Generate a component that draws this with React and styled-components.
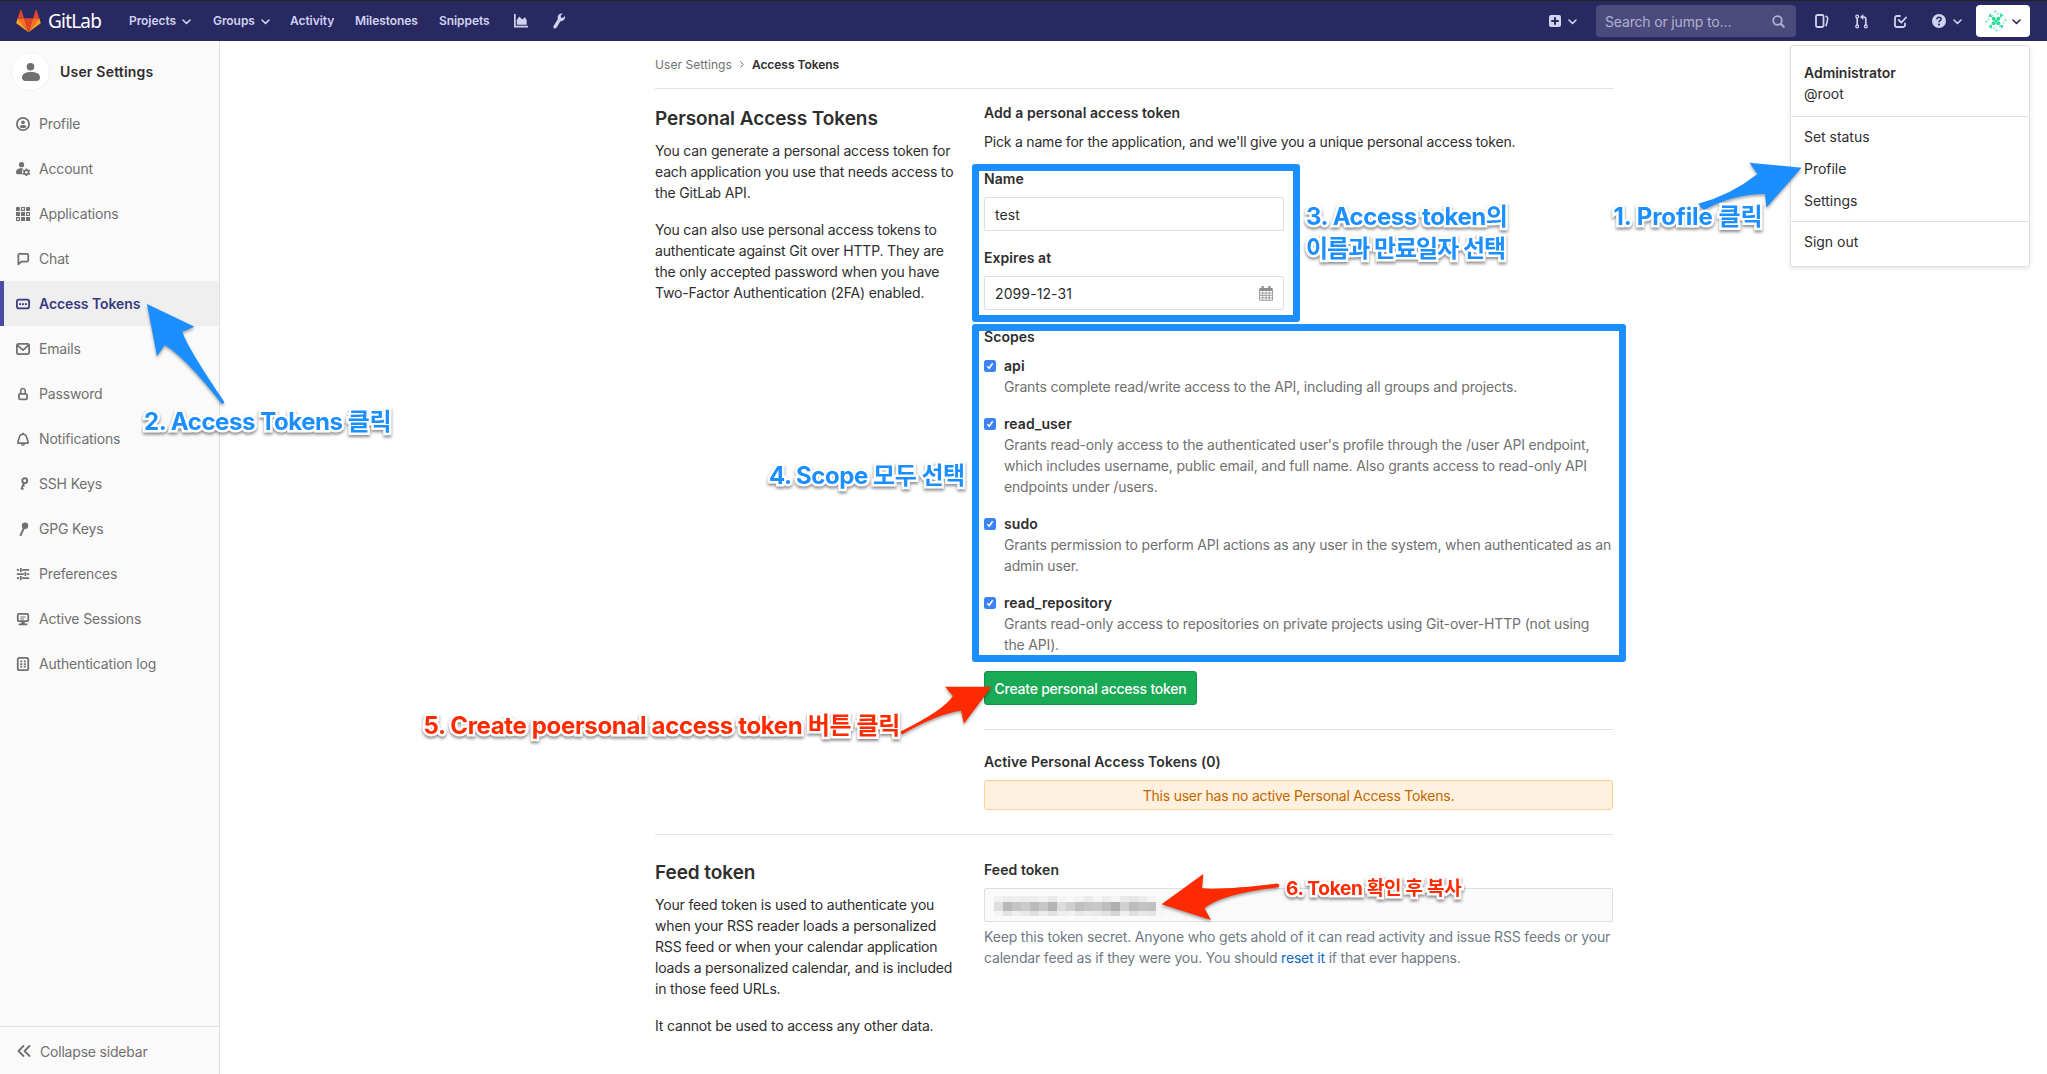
import React from 'react';
import styled, { createGlobalStyle, css } from 'styled-components';

const BLUE = '#1b8fff';
const RED = '#ff2a00';

const GlobalStyle = createGlobalStyle`
  *, *::before, *::after { box-sizing: border-box; }
  html, body { margin: 0; padding: 0; background: #fff; }
  body {
    font-family: Inter, "Noto Sans CJK KR", sans-serif;
    font-size: 14px;
    line-height: 21px;
    letter-spacing: -0.17px;
    color: #2e2e2e;
    overflow: hidden;
  }
  h4, p { margin: 0; font-weight: inherit; }
  a { color: inherit; text-decoration: none; }
  svg { display: block; flex: none; }
`;

const Page = styled.div`
  position: relative;
  width: 2047px;
  height: 1074px;
  display: flex;
  flex-direction: column;
  overflow: hidden;
`;

const Header = styled.header`
  flex: none;
  height: 41px;
  display: flex;
  align-items: center;
  justify-content: space-between;
  padding: 0 17px 0 16px;
  background: #292961;
  border-top: 1px solid #222;
  color: #d1d1f0;
`;

const HeaderGroup = styled.div`
  display: flex;
  align-items: center;
`;

const Brand = styled.a`
  display: flex;
  align-items: center;
  gap: 7px;
  width: 113px;
`;

const BrandName = styled.span`
  font: 400 19px/22px "Noto Sans", sans-serif;
  letter-spacing: -0.8px;
  color: #fff;
`;

const NavLink = styled.a`
  display: flex;
  align-items: center;
  gap: 6px;
  width: ${(p) => p.$w}px;
  padding-bottom: 1px;
  font-size: 12px;
  font-weight: 600;
  letter-spacing: -0.06px;
  white-space: nowrap;
`;

const IconLink = styled.a`
  display: flex;
  align-items: center;
  gap: ${(p) => p.$gap || 6}px;
  margin-right: ${(p) => p.$mr || 0}px;
`;

const Search = styled.div`
  width: 200px;
  height: 32px;
  margin-right: 19px;
  padding: 0 11px 0 9px;
  display: flex;
  align-items: center;
  justify-content: space-between;
  border-radius: 4px;
  background: #4b4a7c;
  color: #b1b0cf;
`;

const AvatarButton = styled.button`
  width: 54px;
  height: 32px;
  padding: 0 9px;
  display: flex;
  align-items: center;
  justify-content: space-between;
  border: 0;
  border-radius: 4px;
  background: #fff;
  color: #292961;
`;

const Body = styled.div`
  flex: 1;
  min-height: 0;
  display: flex;
`;

const Sidebar = styled.nav`
  flex: none;
  width: 220px;
  display: flex;
  flex-direction: column;
  background: #fafafa;
  border-right: 1px solid #e1e1e1;
`;

const SidebarTitle = styled.div`
  height: 60px;
  padding: 1px 0 0 11px;
  display: flex;
  align-items: center;
  gap: 10px;
  font-weight: 600;
  letter-spacing: 0.2px;
`;

const TitleAvatar = styled.span`
  width: 39px;
  height: 39px;
  display: grid;
  place-items: center;
  border-radius: 50%;
  border: 1px solid #f2f2f2;
  background: #fff;
  color: #707070;
`;

const SidebarItem = styled.a`
  height: 45px;
  padding-left: 16px;
  display: flex;
  align-items: center;
  gap: 9px;
  color: #707070;
  letter-spacing: -0.17px;
  ${(p) => p.$active && css`
    padding-left: 12px;
    border-left: 4px solid #4b4ba3;
    background: #efefef;
    color: #393982;
    font-weight: 600;
    letter-spacing: -0.08px;
  `}
`;

const Collapse = styled.button`
  height: 48px;
  margin-top: auto;
  padding: 1px 0 0 17px;
  display: flex;
  align-items: center;
  gap: 9px;
  border: 0;
  border-top: 1px solid #e1e1e1;
  background: transparent;
  color: #707070;
  font: inherit;
  letter-spacing: -0.2px;
`;

const Content = styled.main`
  width: 958px;
  margin-left: 435px;
`;

const Breadcrumbs = styled.div`
  height: 48px;
  padding-bottom: 1px;
  display: flex;
  align-items: center;
  gap: 8px;
  border-bottom: 1px solid #e1e1e1;
  font-size: 12px;
  letter-spacing: 0.06px;
  color: #707070;
  strong { font-weight: 600; color: #2e2e2e; letter-spacing: -0.04px; }
`;

const Section = styled.section`
  display: flex;
  height: ${(p) => p.$h}px;
  border-bottom: ${(p) => (p.$last ? 0 : 1)}px solid #e1e1e1;
`;

const Aside = styled.div`
  flex: none;
  width: 329px;
  padding: ${(p) => p.$top}px 20px 0 0;
  white-space: nowrap;
  p + p { margin-top: 16px; }
`;

const SectionTitle = styled.h4`
  margin-bottom: 9px;
  font-size: 19px;
  line-height: 24px;
  font-weight: 600;
  letter-spacing: -0.06px;
`;

const Main = styled.div`
  flex: 1;
  padding-top: ${(p) => p.$top}px;
`;

const Label = styled.div`
  margin-top: ${(p) => p.$mt || 0}px;
  font-weight: 600;
  letter-spacing: 0.06px;
`;

const Intro = styled.p`
  && { margin-top: 8px; }
  letter-spacing: -0.2px;
  white-space: nowrap;
`;

const TextInput = styled.div`
  width: ${(p) => p.$w || '300px'};
  height: 34px;
  margin-top: 8px;
  padding: 1px 10px 0;
  display: flex;
  align-items: center;
  justify-content: space-between;
  border: 1px solid #dfdfdf;
  border-radius: 2px;
  background: ${(p) => (p.$readonly ? '#fafafa' : '#fff')};
  letter-spacing: 0.1px;
`;

const ScopeRow = styled.div`
  display: flex;
  gap: 8px;
  margin-top: ${(p) => p.$mt || 16}px;
`;

const CheckBox = styled.span`
  flex: none;
  width: 12px;
  height: 12px;
  margin-top: 5px;
  display: grid;
  place-items: center;
  border-radius: 2.5px;
  background: #3b82f6;
`;

const ScopeText = styled.div`
  color: #707070;
  letter-spacing: -0.165px;
  white-space: nowrap;
  ${Label} { color: #2e2e2e; }
`;

const CreateButton = styled.button`
  display: block;
  width: 213px;
  height: 34px;
  margin-top: 16px;
  padding: 0;
  border: 1px solid #168f48;
  border-radius: 3px;
  background: #1aaa55;
  color: #fff;
  font: inherit;
  font-weight: 500;
  letter-spacing: -0.24px;
  white-space: nowrap;
`;

const Rule = styled.hr`
  height: 1px;
  margin: 24px 0 21px;
  border: 0;
  background: #e1e1e1;
`;

const Warning = styled.div`
  height: 30px;
  margin-top: 8px;
  display: flex;
  align-items: center;
  justify-content: center;
  border: 1px solid #fdcf94;
  border-radius: 3px;
  background: #fff1de;
  color: #c26700;
  letter-spacing: -0.23px;
`;

const Mosaic = styled.span`
  display: grid;
  grid-template-columns: repeat(19, 9px);
  grid-template-rows: 6px 9px 5px;
  margin-left: -1px;
`;

const Cell = styled.span`
  background: ${(p) => p.$c};
`;

const Help = styled.p`
  && { margin-top: 4px; }
  color: #707a84;
  letter-spacing: -0.18px;
  white-space: nowrap;
  a { color: #1068bf; }
`;

const Menu = styled.div`
  position: absolute;
  left: 1790px;
  top: 45px;
  width: 240px;
  height: 222px;
  border: 1px solid #e1e1e1;
  border-radius: 3px;
  background: #fff;
  box-shadow: 0 2px 4px rgba(0, 0, 0, 0.1);
`;

const MenuGroup = styled.div`
  padding: ${(p) => p.$p};
  border-top: ${(p) => (p.$line ? 1 : 0)}px solid #dfdfdf;
  letter-spacing: -0.03px;
`;

const MenuItem = styled.div`
  height: ${(p) => p.$h || 32}px;
  line-height: ${(p) => p.$h || 32}px;
  font-weight: ${(p) => (p.$bold ? 600 : 400)};
`;

const Highlight = styled.div`
  position: absolute;
  left: 972px;
  top: ${(p) => p.$top}px;
  width: ${(p) => p.$w}px;
  height: ${(p) => p.$h}px;
  border: 7px solid ${BLUE};
  border-radius: 3px;
`;

const Note = styled.div`
  position: absolute;
  left: ${(p) => p.$x}px;
  top: ${(p) => p.$y}px;
  font-size: ${(p) => p.$size || 24}px;
  line-height: 32px;
  font-weight: 700;
  letter-spacing: ${(p) => p.$ls || 0}px;
  white-space: nowrap;
  color: ${(p) => p.$color || BLUE};
  -webkit-text-stroke: 5px #fff;
  paint-order: stroke fill;
  stroke-linejoin: round;
  filter: drop-shadow(0 2px 1.5px rgba(0, 0, 0, 0.45));
`;

const Arrows = styled.svg`
  position: absolute;
  inset: 0;
  pointer-events: none;
  filter: drop-shadow(0 2px 1.5px rgba(0, 0, 0, 0.35));
`;

const ChevronIcon = styled.svg`
  margin-top: 2px;
`;

const Icon = ({ size = 14, children, ...rest }) => (
  <svg width={size} height={size} viewBox="0 0 16 16" fill="currentColor" {...rest}>{children}</svg>
);
const line = { fill: 'none', stroke: 'currentColor', strokeWidth: 2, strokeLinecap: 'round', strokeLinejoin: 'round' };

const Chevron = () => (
  <ChevronIcon width="9" height="6" viewBox="0 0 9 6">
    <path d="M1 1l3.500 3.500L8 1" {...line} strokeWidth="1.600" />
  </ChevronIcon>
);

const Logo = () => (
  <svg width="25" height="24" viewBox="0 0 25 24">
    <path fill="#e24329" d="M12.500 23.200L17 9.300H8z" />
    <path fill="#fc6d26" d="M12.500 23.200L8 9.300H1.700z" />
    <path fill="#fca326" d="M1.700 9.300L.3 13.500a1 1 0 0 0 .35 1.050L12.500 23.200z" />
    <path fill="#e24329" d="M1.700 9.300H8L5.300 1a.5.5 0 0 0-.9 0z" />
    <path fill="#fc6d26" d="M12.500 23.200L17 9.300h6.300z" />
    <path fill="#fca326" d="M23.300 9.300l1.400 4.200a1 1 0 0 1-.35 1.050L12.500 23.200z" />
    <path fill="#e24329" d="M23.300 9.300H17L19.700 1a.5.5 0 0 1 .9 0z" />
  </svg>
);

const Identicon = () => (
  <svg width="22" height="22" viewBox="0 0 22 22" fill="#2bdc9a">
    {[0, 90, 180, 270].map((a) => (
      <g key={a} transform={`rotate(${a} 11 11)`}>
        <circle cx="8.700" cy="8.700" r="2" />
        <path d="M9.800 9.800h1.400v1.400H9.800zM3 6.800L5.800 3l.2 2.400L8.300 5 6.600 7.300 5.200 6.800z" />
        <path d="M8.300 2.300L11 0l.3 2.300zM2.600 8.400l2.600.7-2 1.200z" opacity=".75" />
      </g>
    ))}
  </svg>
);

const icons = {
  profile: <><circle cx="8" cy="8" r="7" {...line} /><circle cx="8" cy="6" r="2.100" /><path d="M4.300 11.200C4.300 9.600 6 9 8 9s3.700.6 3.700 2.200c0 .8-1.700 1.500-3.700 1.500s-3.700-.7-3.700-1.500z" /></>,
  account: <><circle cx="6.300" cy="3" r="3" /><path d="M0 12c0-3.500 2.500-5 6-5 .9 0 1.600.1 2.300.3C7 8.400 6.700 10 7 11.500c.1 1 .5 1.800 1 2.500H2c-1.300 0-2-.8-2-2z" /><circle cx="11.900" cy="11.700" r="2.500" {...line} strokeWidth="2" /><path d="M11 7.300h1.800v1.500H11zM11 14.500h1.800V16H11zM7.600 10l1-1.500 1.200.8-1 1.500zM14 14l1-1.500 1.200.8-1 1.500zM7.600 13.300l1.200-.8 1 1.500-1.200.8zM14 9.400l1.200-.8 1 1.500-1.200.8z" /></>,
  applications: <><path d="M0 1a1 1 0 0 1 1-1h2.500a1 1 0 0 1 1 1v2.500a1 1 0 0 1-1 1H1a1 1 0 0 1-1-1zM11.500 1a1 1 0 0 1 1-1H15a1 1 0 0 1 1 1v2.500a1 1 0 0 1-1 1h-2.500a1 1 0 0 1-1-1zM0 5.800h4.500v4.500H0zM5.800 5.800h4.500v4.500H5.800zM5.800 11.500h4.500V16H5.800zM11.500 11.500H16V16h-4.500z" /><path d="M6.400.6h3.300v3.300H6.400zM12.100 6.400h3.300v3.300h-3.300zM.6 12.100h3.300v3.300H.6z" fill="none" stroke="currentColor" strokeWidth="1.300" /></>,
  chat: <path d="M4.500 2h8A1.500 1.500 0 0 1 14 3.500v6A1.500 1.500 0 0 1 12.500 11H6l-3.300 3V3.800A1.700 1.700 0 0 1 4.500 2z" {...line} />,
  token: <><rect x="1" y="3" width="14" height="10" rx="2.200" {...line} /><path d="M3.600 7h2.200v2H3.600zM6.900 7h2.200v2H6.900zM10.200 7h2.200v2h-2.200z" /></>,
  mail: <><rect x="1" y="2.200" width="14" height="11.600" rx="2" {...line} /><path d="M2 4l6 5.200L14 4" {...line} /></>,
  lock: <><rect x="3.300" y="7.800" width="9.400" height="6.400" rx="1.700" {...line} /><path d="M5.500 7.500V4.300a2.500 2.500 0 0 1 5 0v3.200" {...line} strokeWidth="1.800" /></>,
  bell: <><path d="M2.200 12.700c0-3 1-3.700 1.400-5.900C4.100 4.200 5.500 2.600 8 2.600s3.900 1.600 4.400 4.200c.4 2.200 1.400 2.900 1.400 5.900z" {...line} strokeWidth="1.900" /><path d="M7 .8h2v2H7zM5.500 14h5c-.4 1.200-1.300 1.800-2.500 1.800S5.900 15.200 5.500 14z" /></>,
  key: <><circle cx="10" cy="4.300" r="2.800" {...line} strokeWidth="2.200" /><path d="M9 7l-3 7.200M7.800 9.700l2 .9M6.200 13l2.400 1" {...line} strokeWidth="2" strokeLinecap="butt" /></>,
  gpg: <><circle cx="10.300" cy="4.300" r="3.700" /><path d="M9.500 6l-4.200 9" {...line} strokeWidth="2.200" /></>,
  prefs: <path d="M1 3.300h2.500M7 3.300h8M1 8h8M12.500 8H15M1 12.700h2.500M7 12.700h8M5.500 1v4.600M10.700 5.700v4.600M5.500 10.400V15" fill="none" stroke="currentColor" strokeWidth="2" />,
  monitor: <><rect x="2" y="2" width="12" height="8.500" rx="1.500" {...line} /><path d="M5 5h6v1.200H5zM5 7.300h4v1.200H5zM6 11h4v2H6zM3 13h10v2.200H3z" /></>,
  log: <><rect x="2" y="1" width="12" height="14" rx="2" {...line} /><path d="M4.800 4h2.300v2H4.800zM8.900 4h2.300v2H8.900zM4.800 7h2.300v2H4.800zM8.900 7h2.300v2H8.900zM4.800 10h2.300v2H4.800zM8.900 10h2.300v2H8.900z" /></>,
};

const sidebarItems = [
  ['Profile', 'profile'], ['Account', 'account'], ['Applications', 'applications'], ['Chat', 'chat'],
  ['Access Tokens', 'token'], ['Emails', 'mail'], ['Password', 'lock'], ['Notifications', 'bell'],
  ['SSH Keys', 'key'], ['GPG Keys', 'gpg'], ['Preferences', 'prefs'], ['Active Sessions', 'monitor'],
  ['Authentication log', 'log'],
];

const scopes = [
  ['api', ['Grants complete read/write access to the API, including all groups and projects.']],
  ['read_user', ["Grants read-only access to the authenticated user's profile through the /user API endpoint,", 'which includes username, public email, and full name. Also grants access to read-only API', 'endpoints under /users.']],
  ['sudo', ['Grants permission to perform API actions as any user in the system, when authenticated as an', 'admin user.']],
  ['read_repository', ['Grants read-only access to repositories on private projects using Git-over-HTTP (not using', 'the API).']],
];

const Lines = ({ of }) => of.map((t, i) => <React.Fragment key={i}>{i > 0 && <br />}{t}</React.Fragment>);

const mosaic = [
  ['#f2f2f2', '#ededed', '#efefef', '#ececec', '#ededed', '#f1f1f1', '#e9e9e9', '#f4f4f4', '#f7f7f7', '#f4f4f4', '#ebebeb', '#f5f5f5', '#ededed', '#f4f4f4', '#e9e9e9', '#e6e6e6', '#ececec', '#f3f3f3', '#fafafa'],
  ['#dedede', '#b8b8b8', '#c5c5c5', '#cbcbcb', '#bbbbbb', '#c6c6c6', '#b4b4b4', '#dcdcdc', '#cfcfcf', '#bfbfbf', '#c5c5c5', '#c8c8c8', '#bdbdbd', '#afafaf', '#d0d0d0', '#bcbcbc', '#c3c3c3', '#c0c0c0', '#f5f5f5'],
  ['#f4f4f4', '#e3e3e3', '#eeeeee', '#e9e9e9', '#dfdfdf', '#ebebeb', '#e2e2e2', '#ededed', '#f1f1f1', '#e8e8e8', '#ececec', '#e9e9e9', '#e2e2e2', '#d5d5d5', '#efefef', '#e0e0e0', '#e8e8e8', '#e5e5e5', '#f7f7f7'],
];

export default function App() {
  return (
    <Page>
      <GlobalStyle />
      <Header>
        <HeaderGroup>
          <Brand><Logo /><BrandName>GitLab</BrandName></Brand>
          <NavLink $w={84}>Projects <Chevron /></NavLink>
          <NavLink $w={77}>Groups <Chevron /></NavLink>
          <NavLink $w={65}>Activity</NavLink>
          <NavLink $w={84}>Milestones</NavLink>
          <NavLink $w={75}>Snippets</NavLink>
          <IconLink $mr={25}>
            <svg width="14" height="14" viewBox="0 0 14 14" fill="currentColor"><path d="M0 0h1.700v11.800H14V13.500H0zM2.800 10.800V6l2.600-3.400L8.200 5.400 11 3.300l1.700 3v4.500z" /></svg>
          </IconLink>
          <IconLink>
            <svg width="13" height="16" viewBox="0 0 13 16" fill="currentColor"><path d="M11.800 2.900L9.800 5 8 4.500l-.4-1.700L9.700.7A4 4 0 0 0 4.900 5.900L.6 12.900c-.5.9-.3 1.900.5 2.400s1.900.2 2.400-.6L7.400 8.200A4 4 0 0 0 11.800 2.900z" /></svg>
          </IconLink>
        </HeaderGroup>
        <HeaderGroup>
          <IconLink $gap={7} $mr={19}>
            <svg width="12" height="12" viewBox="0 0 12 12"><path fillRule="evenodd" fill="currentColor" d="M2 0h8a2 2 0 0 1 2 2v8a2 2 0 0 1-2 2H2a2 2 0 0 1-2-2V2a2 2 0 0 1 2-2zm3 2.300V5H2.300v2H5v2.700h2V7h2.700V5H7V2.300z" /></svg>
            <Chevron />
          </IconLink>
          <Search>
            Search or jump to…
            <svg width="13" height="13" viewBox="0 0 13 13"><circle cx="5.500" cy="5.500" r="4.300" {...line} strokeWidth="1.800" /><path d="M9 9l2.800 2.800" {...line} /></svg>
          </Search>
          <IconLink $mr={26}>
            <svg width="14" height="14" viewBox="0 0 14 14"><rect x="1" y="1" width="7.500" height="12" rx="1.500" {...line} strokeWidth="1.800" /><path d="M11 2.200c1.400.5 1.900 1 1.700 2.400-.2 2-.6 4-1.700 7" {...line} strokeWidth="1.600" /></svg>
          </IconLink>
          <IconLink $mr={26}>
            <svg width="13" height="15" viewBox="0 0 13 15"><g {...line} strokeWidth="1.300"><circle cx="2.200" cy="2.600" r="1.400" /><circle cx="2.200" cy="12.400" r="1.400" /><circle cx="10.800" cy="12.400" r="1.400" /><path d="M2.200 4.500v6M6.800 3h2a2 2 0 0 1 2 2v5.500" strokeWidth="1.700" /></g><path fill="currentColor" d="M8.300 0v6L5 3z" /></svg>
          </IconLink>
          <IconLink $mr={25}>
            <svg width="13" height="13" viewBox="0 0 13 13"><path d="M6 1H2.800A1.800 1.800 0 0 0 1 2.800v7.400A1.800 1.800 0 0 0 2.800 12h6.400a1.800 1.800 0 0 0 1.800-1.800V8.500M4.700 5l2.600 2.600L12 2.500" {...line} strokeWidth="1.800" /></svg>
          </IconLink>
          <IconLink $gap={7} $mr={14}>
            <svg width="14" height="14" viewBox="0 0 14 14"><circle cx="7" cy="7" r="7" fill="currentColor" /><path d="M4.900 5.400C5 3.900 5.900 3.300 7 3.300c1.300 0 2.100.7 2.100 1.800C9.100 6.600 7 6.600 7 8.300" fill="none" stroke="#292961" strokeWidth="1.600" /><circle cx="7" cy="10.500" r="1.050" fill="#292961" /></svg>
            <Chevron />
          </IconLink>
          <AvatarButton><Identicon /><Chevron /></AvatarButton>
        </HeaderGroup>
      </Header>

      <Body>
        <Sidebar>
          <SidebarTitle>
            <TitleAvatar>
              <svg width="18" height="18" viewBox="0 0 18 18" fill="currentColor"><circle cx="8.500" cy="3.800" r="3.800" /><path d="M0 14.500C0 10.300 4 8.900 9 8.900s9 1.400 9 5.600c0 2-1.200 3.500-3.500 3.500h-11C1.200 18 0 16.500 0 14.500z" /></svg>
            </TitleAvatar>
            User Settings
          </SidebarTitle>
          {sidebarItems.map(([label, icon]) => (
            <SidebarItem key={label} $active={icon === 'token'}><Icon>{icons[icon]}</Icon>{label}</SidebarItem>
          ))}
          <Collapse>
            <svg width="14" height="12" viewBox="0 0 14 12"><path d="M6.500 1l-5 5 5 5M12.500 1l-5 5 5 5" {...line} strokeWidth="1.800" /></svg>
            Collapse sidebar
          </Collapse>
        </Sidebar>

        <Content>
          <Breadcrumbs>
            <span>User Settings</span>
            <svg width="4" height="7" viewBox="0 0 4 7"><path d="M.7.7l2.500 2.800L.7 6.300" {...line} strokeWidth="1" /></svg>
            <strong>Access Tokens</strong>
          </Breadcrumbs>

          <Section $h={746}>
            <Aside $top={18}>
              <SectionTitle>Personal Access Tokens</SectionTitle>
              <p><Lines of={['You can generate a personal access token for', 'each application you use that needs access to', 'the GitLab API.']} /></p>
              <p><Lines of={['You can also use personal access tokens to', 'authenticate against Git over HTTP. They are', 'the only accepted password when you have', 'Two-Factor Authentication (2FA) enabled.']} /></p>
            </Aside>
            <Main $top={13}>
              <Label>Add a personal access token</Label>
              <Intro>Pick a name for the application, and we'll give you a unique personal access token.</Intro>
              <Label $mt={16}>Name</Label>
              <TextInput>test</TextInput>
              <Label $mt={16}>Expires at</Label>
              <TextInput>
                2099-12-31
                <svg width="14" height="15" viewBox="0 0 14 15"><path d="M.5 3.500h13v10.800H.5zM.5 7h13M.5 9.400h13M.5 11.900h13M3.700 5.500v9M7 5.500v9M10.300 5.500v9" fill="none" stroke="#999" strokeWidth=".9" /><path d="M.5 2h13v3H.5zM2.500 0h2.300v4H2.500zM9.200 0h2.300v4H9.200z" fill="#8e8e8e" /></svg>
              </TextInput>
              <Label $mt={16}>Scopes</Label>
              {scopes.map(([name, text], i) => (
                <ScopeRow key={name} $mt={i === 0 ? 8 : 16}>
                  <CheckBox>
                    <svg width="8" height="8" viewBox="0 0 8 8"><path d="M1.300 4.300l1.900 2L6.700 1.300" fill="none" stroke="#fff" strokeWidth="1.500" /></svg>
                  </CheckBox>
                  <ScopeText><Label>{name}</Label><Lines of={text} /></ScopeText>
                </ScopeRow>
              ))}
              <CreateButton>Create personal access token</CreateButton>
              <Rule />
              <Label>Active Personal Access Tokens (0)</Label>
              <Warning>This user has no active Personal Access Tokens.</Warning>
            </Main>
          </Section>

          <Section $h={238} $last>
            <Aside $top={26}>
              <SectionTitle>Feed token</SectionTitle>
              <p><Lines of={['Your feed token is used to authenticate you', 'when your RSS reader loads a personalized', 'RSS feed or when your calendar application', 'loads a personalized calendar, and is included', 'in those feed URLs.']} /></p>
              <p>It cannot be used to access any other data.</p>
            </Aside>
            <Main $top={24}>
              <Label>Feed token</Label>
              <TextInput $w="100%" $readonly>
                <Mosaic>{mosaic.flat().map((c, i) => <Cell key={i} $c={c} />)}</Mosaic>
              </TextInput>
              <Help>
                Keep this token secret. Anyone who gets ahold of it can read activity and issue RSS feeds or your<br />
                calendar feed as if they were you. You should <a>reset it</a> if that ever happens.
              </Help>
            </Main>
          </Section>
        </Content>
      </Body>

      <Menu>
        <MenuGroup $p="16px 13px 12px">
          <MenuItem $h={21} $bold>Administrator</MenuItem>
          <MenuItem $h={21}>@root</MenuItem>
        </MenuGroup>
        <MenuGroup $line $p="4px 13px 4px">
          <MenuItem>Set status</MenuItem>
          <MenuItem>Profile</MenuItem>
          <MenuItem>Settings</MenuItem>
        </MenuGroup>
        <MenuGroup $line $p="4px 13px">
          <MenuItem>Sign out</MenuItem>
        </MenuGroup>
      </Menu>

      <Highlight $top={164} $w={328} $h={158} />
      <Highlight $top={324} $w={654} $h={338} />
      <Arrows width="2047" height="1074" viewBox="0 0 2047 1074">
        <g fill={BLUE}>
          <path d="M1801.500 167.700L1749.400 162.700L1757.500 174Q1731 195 1697.500 204L1704 210Q1733 194 1765 194L1766.500 207.500Z" />
          <path d="M147 304L194.500 326.700L182.300 331.700Q187 347 224 401.500Q224 405 221.500 403.500Q184 356 164.700 345.300L157 356.300Z" />
        </g>
        <g fill={RED}>
          <path d="M991.500 686.700L945 686.700L952.900 696Q944 710 900.600 731.500L902 734.500Q937 714 961 710.700L963.900 723.700Z" />
          <path d="M1161.500 904.300L1203.300 874L1202 888.300Q1225 890 1277.500 883.500Q1280.500 885 1278.500 887.300Q1222 894 1204.500 908.300L1211 920Z" />
        </g>
      </Arrows>
      <Note $x={1613.5} $y={201} $ls={-0.05}>1. Profile 클릭</Note>
      <Note $x={144} $y={406} $ls={-0.43}>2. Access Tokens 클릭</Note>
      <Note $x={1306} $y={201} $ls={-0.43}>3. Access token의</Note>
      <Note $x={1306} $y={233} $ls={-1}>이름과 만료일자 선택</Note>
      <Note $x={769} $y={460} $ls={-0.45}>4. Scope 모두 선택</Note>
      <Note $x={423.5} $y={710} $ls={-0.34} $color={RED}>5. Create poersonal access token 버튼 클릭</Note>
      <Note $x={1286} $y={873} $ls={-0.25} $size={19} $color={RED}>6. Token 확인 후 복사</Note>
    </Page>
  );
}
